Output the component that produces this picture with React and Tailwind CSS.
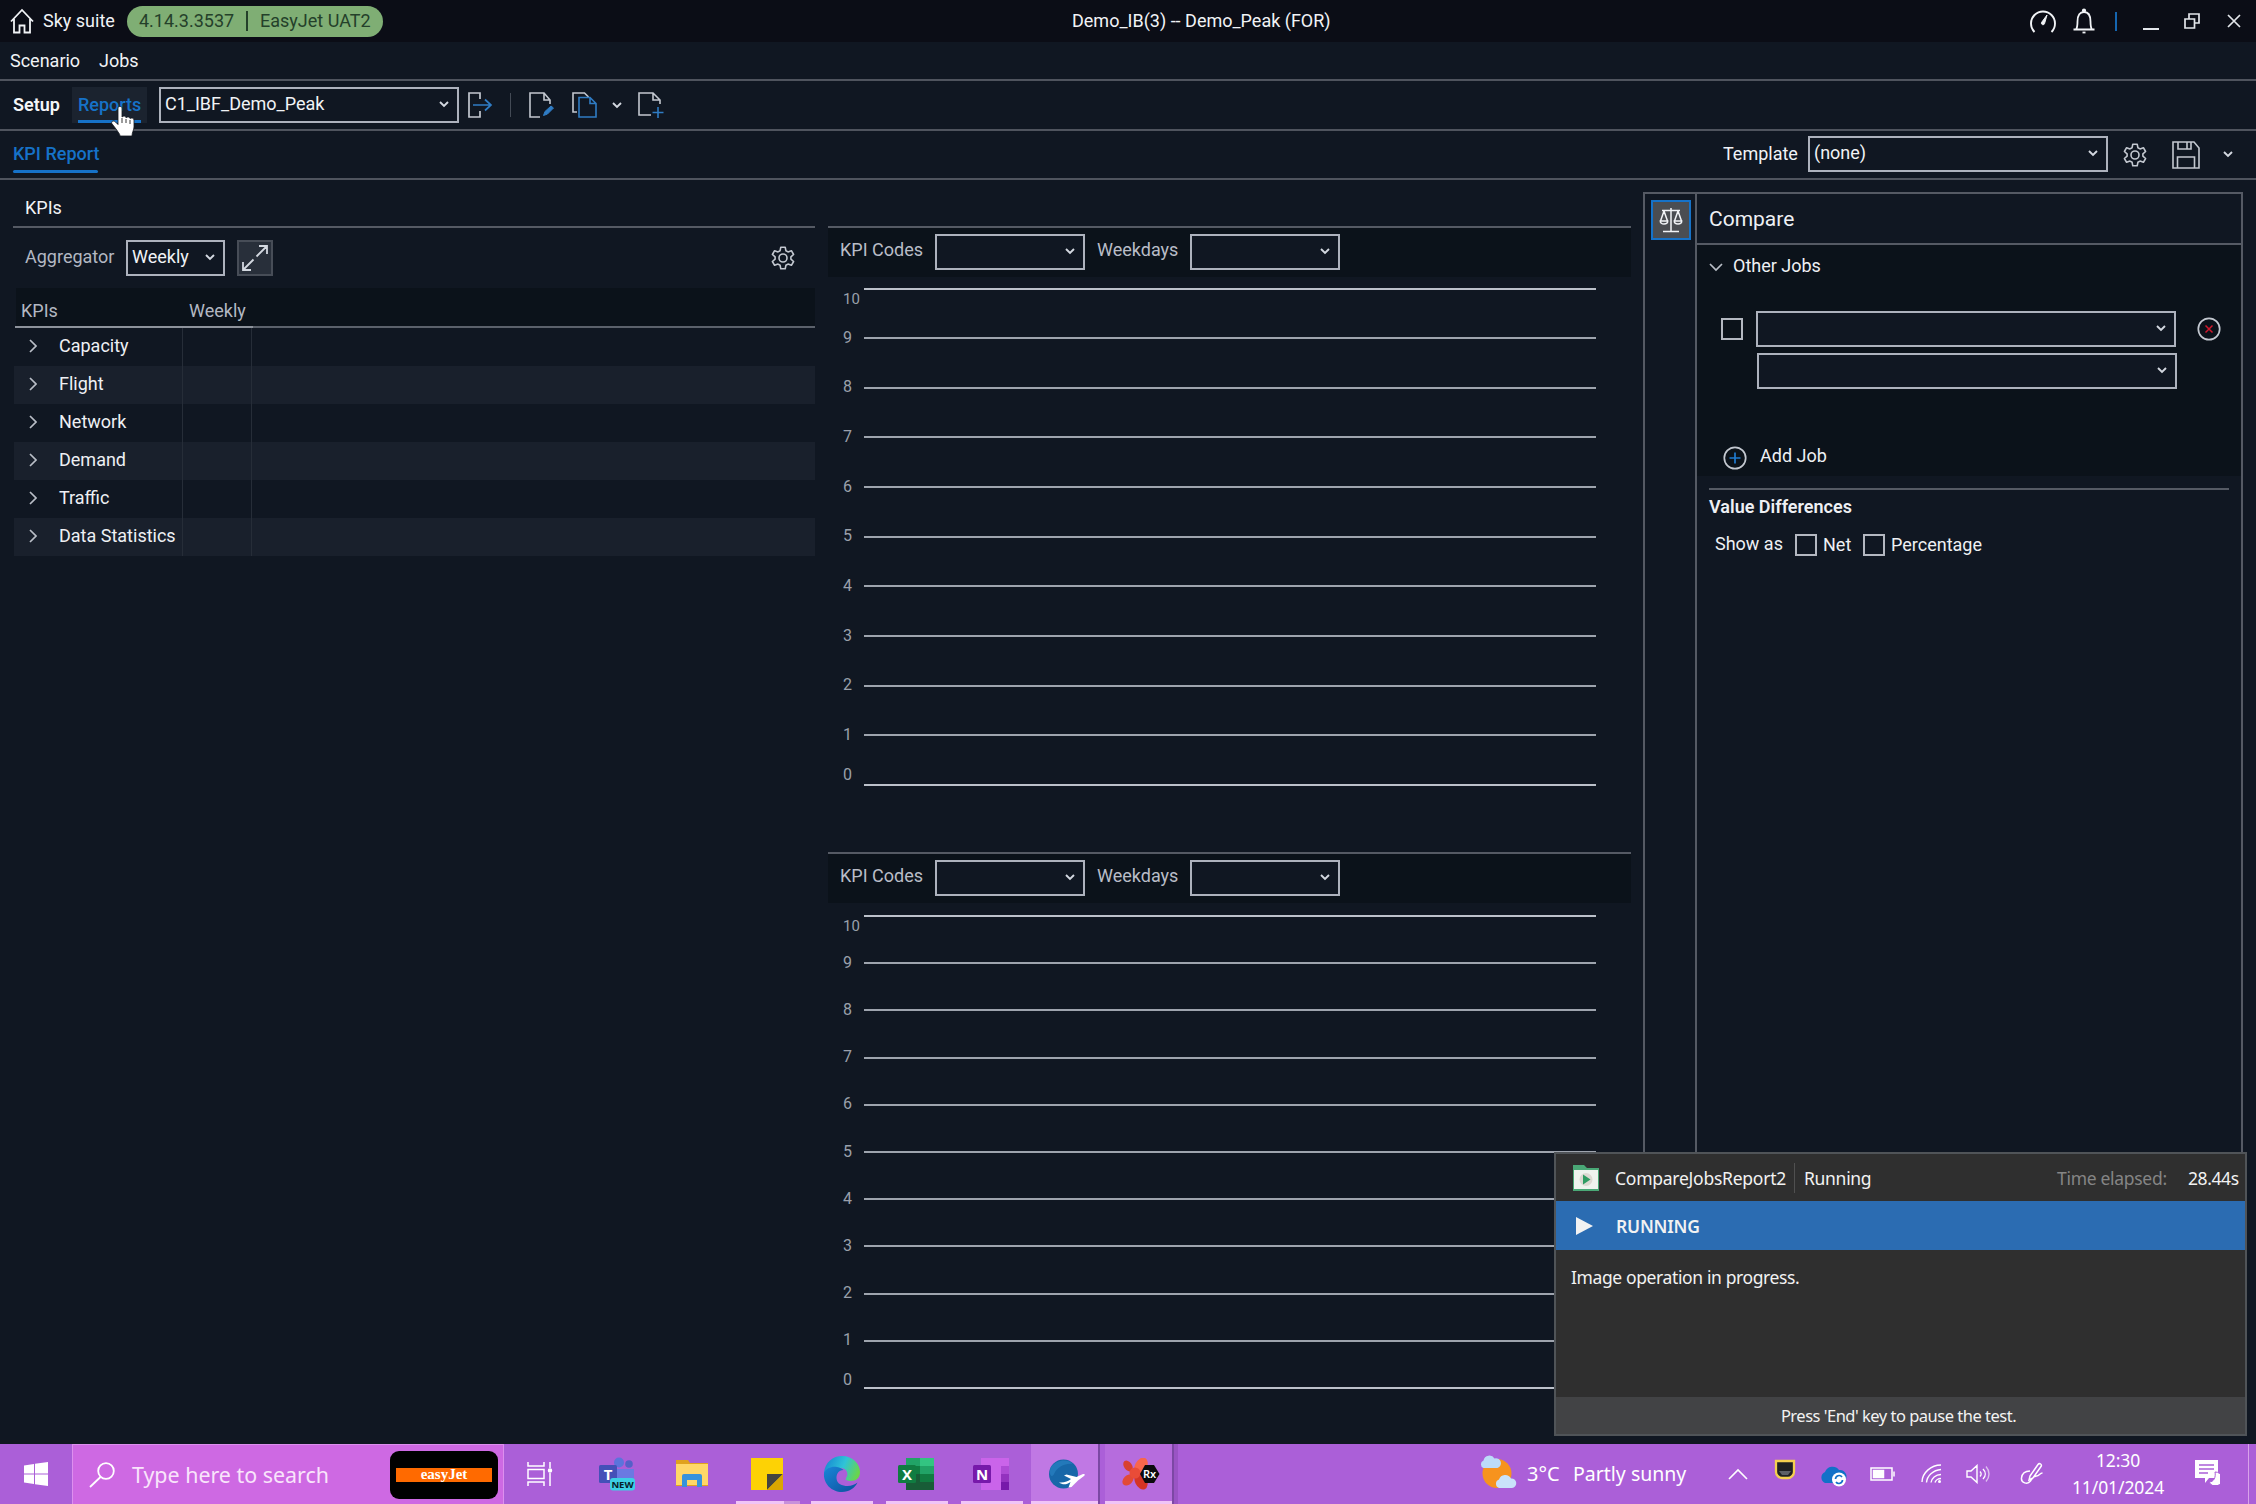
import React from "react";

function Chevron({ className = "" }) {
  return (
    <svg viewBox="0 0 10 7" className={"h-[7px] w-[10px] shrink-0 " + className} fill="none" stroke="#d3d8e0" strokeWidth="1.9">
      <path d="M1 1l4 4 4-4" />
    </svg>
  );
}

function Select({ label = "", className = "" }) {
  return (
    <div className={"flex h-9 shrink-0 items-center justify-between border-2 border-[#adb2bd] bg-[#101722] pr-2 pl-[5px] text-[#f1f3f6] " + className}>
      <span className="-mt-0.5 -ml-px whitespace-nowrap">{label}</span>
      <Chevron className="-mt-0.5" />
    </div>
  );
}

function Check({ className = "" }) {
  return <div className={"size-[22px] shrink-0 border-2 border-[#b4b8c1] " + className} />;
}

function Gear({ className = "" }) {
  return (
    <svg viewBox="0 0 26 26" className={"size-[26px] shrink-0 " + className} fill="none" stroke="#c3c8d0" strokeWidth="1.6" strokeLinejoin="round">
      <path d="M10.8 1.2h4.4l.7 3.5 2.1 1.2 3.4-1.2 2.2 3.8-2.7 2.3v2.4l2.7 2.3-2.2 3.8-3.4-1.2-2.1 1.2-.7 3.5h-4.4l-.7-3.5L8 18.1l-3.4 1.2-2.2-3.8 2.7-2.3v-2.4L2.4 8.5l2.2-3.8L8 5.9l2.1-1.2z" transform="translate(0 1)" />
      <circle cx="13" cy="13" r="4" />
    </svg>
  );
}

function TitleBar() {
  return (
    <header className="flex h-[42px] shrink-0 items-center bg-[#0b0d16] text-[#f1f3f6]">
      <svg viewBox="0 0 24 26" className="ml-[10px] h-[26px] w-6 shrink-0" fill="none" stroke="#f1f3f6" strokeWidth="1.8">
        <path d="M1 13.5L12 2l11 11.500M4 11v13.500h5.500v-7h5v7H20V11" />
      </svg>
      <span className="ml-[9px] w-[84px] text-[18px] whitespace-nowrap">Sky suite</span>
      <div className="flex h-[31px] w-64 shrink-0 items-center rounded-full bg-[#7fae74] pl-3 text-[18px] text-[#24402a]">
        <span className="w-[107px] whitespace-nowrap">4.14.3.3537</span>
        <span className="h-5 w-0.5 bg-[#24402a]" />
        <span className="ml-3 whitespace-nowrap">EasyJet UAT2</span>
      </div>
      <span className="ml-[689px] w-[957px] text-[18px] whitespace-nowrap">Demo_IB(3) -- Demo_Peak (FOR)</span>
      <svg viewBox="0 0 28 26" className="h-[26px] w-7 shrink-0" fill="none" stroke="#f1f3f6" strokeWidth="1.9">
        <path d="M5.500 24A12 12 0 1 1 22.500 24" />
        <path d="M18 7l-5.500 7.500a1.600 1.600 0 0 0 3 1.200z" fill="#f1f3f6" strokeWidth="1" />
      </svg>
      <svg viewBox="0 0 24 26" className="ml-[15px] h-[26px] w-6 shrink-0" fill="none" stroke="#f1f3f6" strokeWidth="1.800">
        <path d="M1.500 21.500h21M4 21.500c1.500-2 1.500-4 1.500-8C5.500 7 8 4 12 4s6.500 3 6.500 9.500c0 4 0 6 1.500 8" />
        <circle cx="12" cy="2.500" r="1.200" fill="#f1f3f6" />
        <path d="M10.500 24.500h3" />
      </svg>
      <span className="ml-[19px] h-[19px] w-0.5 shrink-0 bg-[#1565b0]" />
      <span className="mt-4 ml-[26px] h-0.5 w-4 shrink-0 bg-[#e3e6ea]" />
      <svg viewBox="0 0 16 16" className="ml-[25px] size-4 shrink-0" fill="none" stroke="#e3e6ea" strokeWidth="1.700">
        <path d="M1 6h9.500v9H1zM5 6V1h10v9h-4.500" />
      </svg>
      <svg viewBox="0 0 14 14" className="ml-[27px] size-[14px] shrink-0" stroke="#e3e6ea" strokeWidth="1.700">
        <path d="M1 1l12 12M13 1L1 13" />
      </svg>
    </header>
  );
}

function Toolbar() {
  return (
    <div className="flex h-[48px] shrink-0 items-center">
      <span className="ml-[13px] w-[59px] font-semibold text-[#f4f6f8]">Setup</span>
      <div className="flex h-9 w-[75px] shrink-0 flex-col bg-[#1b232f] pl-[6px] text-[#1672c8]">
        <span className="h-[33px] leading-[35px] font-medium">Reports</span>
        <span className="h-[3px] w-[63px] bg-[#1672c8]" />
      </div>
      <Select label="C1_IBF_Demo_Peak" className="ml-3 w-[300px]" />
      <svg viewBox="0 0 25 26" className="ml-[9px] h-[26px] w-[25px] shrink-0" fill="none" stroke="#c3c8d0" strokeWidth="1.700">
        <path d="M12 7V1H1v24h11v-6" />
        <path d="M5 13h18M17 7.500l6 5.500-6 5.500" stroke="#2f7cc4" />
      </svg>
      <span className="ml-[17px] h-6 w-px shrink-0 bg-[#434a55]" />
      <svg viewBox="0 0 26 26" className="ml-[18px] size-[26px] shrink-0" fill="none" stroke="#c3c8d0" strokeWidth="1.600">
        <path d="M11 25H1V1h14l6 7v4M15 1v7h6" />
        <path d="M14.500 23.500l1.500-4 6-5.500 2.500 2-6 6z" fill="#2f7cc4" stroke="#2f7cc4" strokeWidth="1" />
      </svg>
      <svg viewBox="0 0 26 26" className="ml-[17px] size-[26px] shrink-0" fill="none" strokeWidth="1.600">
        <path d="M5 20H1V1h11.500l4 4" stroke="#c3c8d0" />
        <path d="M7 5.500h11l6 6V25H7zM18 5.500v6h6" stroke="#2f7cc4" />
      </svg>
      <Chevron className="ml-[14px]" />
      <svg viewBox="0 0 26 26" className="ml-4 size-[26px] shrink-0" fill="none" stroke="#c3c8d0" strokeWidth="1.600">
        <path d="M13 23H1V1h14l7 7v4M15 1v7h7" />
        <path d="M20 15v11M14.500 20.500h11" stroke="#2f7cc4" />
      </svg>
    </div>
  );
}

function ReportBar() {
  return (
    <div className="flex h-[47px] shrink-0 items-center">
      <div className="ml-[13px] flex h-10 w-[1710px] shrink-0 flex-col text-[#1672c8]">
        <span className="h-[35px] leading-[37px] font-medium">KPI Report</span>
        <span className="h-[3px] w-[85px] rounded-full bg-[#1672c8]" />
      </div>
      <span className="-mt-0.5 w-[85px] shrink-0 text-[#f1f3f6]">Template</span>
      <Select label="(none)" className="-mt-px w-[300px]" />
      <Gear className="ml-[14px]" />
      <svg viewBox="0 0 28 28" className="ml-6 size-7 shrink-0" fill="none" stroke="#c3c8d0" strokeWidth="1.600">
        <path d="M1 1h21l5 6v20H1zM6 1v7h13V1M15 1v7M5.500 27V16h17v11" />
      </svg>
      <Chevron className="ml-[23px]" />
    </div>
  );
}

const kpis = ["Capacity", "Flight", "Network", "Demand", "Traffic", "Data Statistics"];

function KpiPanel() {
  return (
    <section className="ml-[13px] flex w-[802px] shrink-0 flex-col">
      <div className="flex h-[48px] items-center border-b-2 border-[#555a64] pt-[9px] pl-3 text-[#f1f3f6]">KPIs</div>
      <div className="flex h-[60px] items-center pl-3 text-[#b3b8c2]">
        <span className="-mt-[3px] w-[101px]">Aggregator</span>
        <Select label="Weekly" className="w-[99px]" />
        <div className="ml-3 flex size-9 items-center justify-center border-2 border-[#474d57] bg-[#282f3a]">
          <svg viewBox="0 0 26 26" className="size-[26px] shrink-0" fill="none" stroke="#d3d8e0" strokeWidth="1.800">
            <path d="M14.500 11.500L25 1M17 1h8v8M11.500 14.500L1 25M1 17v8h8" />
          </svg>
        </div>
        <Gear className="ml-[497px]" />
      </div>
      <div className="ml-[3px] flex h-[38px] items-center bg-[#0b121a] pt-[7px] pl-[5px] text-[#b3b8c2]">
        <span className="w-[168px]">KPIs</span>
        <span>Weekly</span>
      </div>
      <div className="ml-0.5 flex h-0.5 bg-[#5b616b]">
        <span className="w-[238px] bg-[#8d929b]" />
      </div>
      {kpis.map((name, i) => (
        <div key={name} className={"ml-px flex h-[38px] shrink-0 items-center " + (i % 2 ? "bg-[#19202c]" : "")}>
          <div className="flex h-full w-[169px] items-center border-r border-[#262d38] pb-0.5 pl-[15px]">
            <svg viewBox="0 0 8 14" className="h-[14px] w-2 shrink-0" fill="none" stroke="#b9bec7" strokeWidth="1.700">
              <path d="M1 1l6 6-6 6" />
            </svg>
            <span className="ml-[22px] whitespace-nowrap text-[#eef0f4]">{name}</span>
          </div>
          <div className="h-full w-[69px] border-r border-[#262d38]" />
        </div>
      ))}
    </section>
  );
}

function Chart({ first, step, labelTop, labelBottom, height }) {
  const ticks = Array.from({ length: 11 }, (_, i) => 10 - i);
  return (
    <svg width="803" height={height} className="block shrink-0" fontFamily="Roboto, sans-serif" fontSize="16" fill="#9aa0ab">
      {ticks.map((t, i) => {
        const y = first + i * step;
        const mid = i === 0 ? labelTop : i === 10 ? labelBottom : y - 1.5;
        return (
          <g key={t}>
            <rect x="36" y={Math.round(y) - 1} width="732" height="2" fill={i === 0 || i === 10 ? "#bcc1ca" : "#9ea4ae"} />
            <text x="15" y={mid + 6} fontSize={i === 0 ? 15 : 16}>{t}</text>
          </g>
        );
      })}
    </svg>
  );
}

function ChartPanel(props) {
  return (
    <>
      <div className="flex h-[51px] shrink-0 items-start border-t-2 border-[#555a64] bg-[#0b121a] pt-1.5 pl-3 text-[#b9bdc7]">
        <span className="mt-1 w-[95px]">KPI Codes</span>
        <Select className="w-[150px]" />
        <span className="mt-1 ml-3 w-[93px]">Weekdays</span>
        <Select className="w-[150px]" />
      </div>
      <Chart {...props} />
    </>
  );
}

function ComparePanel() {
  return (
    <aside className="mt-3 mb-3 ml-[12px] flex w-[600px] shrink-0 border-2 border-b-0 border-[#555a64]">
      <div className="flex w-[52px] shrink-0 justify-center border-r-2 border-[#555a64] pt-1.5 pl-px">
        <div className="flex size-10 items-center justify-center border-2 border-[#1672c8] bg-[#4a4d52]">
          <svg viewBox="0 0 24 26" className="h-[26px] w-6 shrink-0" fill="none" stroke="#f1f3f6" strokeWidth="1.500">
            <path d="M12 1v23M4 24.500h16M3 3.500h18M5 4L1.500 14M5 4l3.500 10M19 4l-3.500 10M19 4l3.500 10M1.300 14h7.400c0 2-1.500 3-3.700 3s-3.700-1-3.700-3zM15.300 14h7.400c0 2-1.500 3-3.700 3s-3.700-1-3.700-3z" />
          </svg>
        </div>
      </div>
      <div className="flex flex-1 flex-col text-[#eef0f4]">
        <div className="flex h-[51px] shrink-0 items-center border-b-2 border-[#555a64] pl-3 text-[21px]">Compare</div>
        <div className="flex h-[231px] shrink-0 flex-col bg-[#0b121a]">
          <div className="flex h-[42px] items-center pl-3">
            <svg viewBox="0 0 14 9" className="mt-0.5 h-[9px] w-[14px]" fill="none" stroke="#b9bec7" strokeWidth="1.700">
              <path d="M1 1l6 6 6-6" />
            </svg>
            <span className="ml-[10px]">Other Jobs</span>
          </div>
          <div className="mt-6 flex h-9 items-center pl-6">
            <Check />
            <Select className="ml-[13px] w-[420px]" />
            <svg viewBox="0 0 24 24" className="ml-[21px] size-6 shrink-0" fill="none">
              <circle cx="12" cy="12" r="10.700" stroke="#c3c8d0" strokeWidth="1.700" />
              <path d="M8.500 8.500l7 7M15.500 8.500l-7 7" stroke="#d0182c" strokeWidth="1.500" />
            </svg>
          </div>
          <Select className="mt-1.5 ml-[60px] w-[420px]" />
          <div className="mt-[57px] flex h-6 items-center pl-[26px]">
            <svg viewBox="0 0 24 24" className="size-6 shrink-0" fill="none">
              <circle cx="12" cy="12" r="10.700" stroke="#c3c8d0" strokeWidth="1.700" />
              <path d="M12 6.500v11M6.500 12h11" stroke="#1f7bd0" strokeWidth="1.700" />
            </svg>
            <span className="-mt-1 ml-[13px]">Add Job</span>
          </div>
        </div>
        <div className="mx-3 mt-3 h-0.5 bg-[#555a64]" />
        <div className="mt-[5px] pl-3 leading-6 font-semibold">Value Differences</div>
        <div className="mt-[14px] flex h-6 items-center pl-[18px]">
          <span className="-mt-0.5 w-[80px]">Show as</span>
          <Check />
          <span className="ml-1.5 w-10">Net</span>
          <Check />
          <span className="ml-1.5">Percentage</span>
        </div>
      </div>
    </aside>
  );
}

function RunPopup() {
  return (
    <div className="absolute top-[1152px] left-[1554px] flex h-[284px] w-[693px] flex-col border-2 border-[#505458] bg-[#2f2f2f] font-['Noto_Sans',sans-serif] text-[17.500px] text-[#f2f2f2]">
      <div className="flex h-[47px] shrink-0 items-center">
        <svg viewBox="0 0 28 28" className="ml-4 size-7 shrink-0">
          <path d="M1 1h11l3 3h12v23H1z" fill="#4aa876" />
          <path d="M2 6h24v19H2z" fill="#eef3ee" />
          <circle cx="14" cy="15.500" r="6.500" fill="#dcd9d2" />
          <path d="M11 10.500l7.500 5-7.500 5z" fill="#2f9c63" />
        </svg>
        <span className="ml-[15px] w-[179px] whitespace-nowrap tracking-[-0.25px]">CompareJobsReport2</span>
        <span className="h-[30px] w-px bg-[#505050]" />
        <span className="ml-[9px] w-[253px] tracking-[-0.3px]">Running</span>
        <span className="w-[131px] whitespace-nowrap tracking-[-0.3px] text-[#858585]">Time elapsed:</span>
        <span className="tracking-[-0.4px]">28.44s</span>
      </div>
      <div className="flex h-[49px] shrink-0 items-center bg-[#2b6cb2]">
        <svg viewBox="0 0 17 18" className="ml-5 h-[18px] w-[17px]"><path d="M0 0l17 9-17 9z" fill="#f2f2f2" /></svg>
        <span className="ml-[23px] font-semibold tracking-[-0.2px]">RUNNING</span>
      </div>
      <div className="flex-1 pt-[15px] pl-[15px] tracking-[-0.38px]">Image operation in progress.</div>
      <div className="flex h-[37px] shrink-0 items-center justify-center bg-[#424345] pr-1 text-[16.500px] tracking-[-0.5px]">Press 'End' key to pause the test.</div>
    </div>
  );
}

function AppButton({ children, className = "", line = "bg-[#f0c4f7]" }) {
  return (
    <div className={"flex h-full shrink-0 flex-col items-center " + className}>
      <div className="flex flex-1 items-center">{children}</div>
      <div className={"-mt-[3px] h-[3px] w-full " + line} />
    </div>
  );
}

function Taskbar() {
  return (
    <footer className="flex h-[60px] shrink-0 items-center bg-[#ab5fd8] font-['Noto_Sans',sans-serif] text-white">
      <svg viewBox="0 0 24 24" className="ml-6 size-6 shrink-0" fill="#fff">
        <path d="M0 3.500l10-1.500v9.500H0zM11 1.800L24 0v11.500H11zM0 12.500h10V22L0 20.600zM11 12.500h13V24l-13-1.800z" />
      </svg>
      <div className="ml-6 flex h-full w-[432px] shrink-0 items-center border border-b-0 border-[#dd8fee] bg-[#ce69e3]">
        <svg viewBox="0 0 26 26" className="ml-4 size-[26px] shrink-0" fill="none" stroke="#fff" strokeWidth="1.800">
          <circle cx="17" cy="9" r="7.800" />
          <path d="M11.500 15L1 25" />
        </svg>
        <span className="ml-[17px] w-[258px] text-[21.400px] whitespace-nowrap text-[#f9e4fb]">Type here to search</span>
        <div className="flex h-12 w-[108px] shrink-0 items-center justify-center rounded-[9px] bg-black">
          <div className="flex h-[14px] w-24 items-center justify-center bg-[#ff6a00] font-['Liberation_Serif',serif] text-[15px] leading-none font-bold">easyJet</div>
        </div>
      </div>
      <svg viewBox="0 0 26 26" className="ml-[23px] size-[26px] shrink-0" fill="none" stroke="#fff" strokeWidth="1.500">
        <path d="M1 1v4h16V1M1 25v-4h16v4M1 8.500h16v9H1zM23 1v6M23 12v13" />
        <circle cx="23" cy="9.500" r="1.500" fill="#fff" />
      </svg>
      <svg viewBox="0 0 38 34" className="ml-[45px] h-[34px] w-[38px] shrink-0">
        <circle cx="21" cy="5.500" r="5" fill="#5b74dc" />
        <circle cx="31" cy="7" r="3.800" fill="#5560c8" />
        <path d="M19 12h17v8a8 8 0 0 1-8 8h-9z" fill="#6b79e2" />
        <rect x="1" y="8" width="18" height="18" rx="1.500" fill="#4450b8" />
        <text x="10" y="22.500" textAnchor="middle" fontSize="15" fontWeight="700" fill="#fff" fontFamily="Noto Sans, sans-serif">T</text>
        <rect x="12" y="21" width="25" height="12.500" rx="3" fill="#3cd0e4" />
        <text x="24.500" y="31" textAnchor="middle" fontSize="9.500" fontWeight="700" fill="#08202a" fontFamily="Noto Sans, sans-serif">NEW</text>
      </svg>
      <svg viewBox="0 0 34 28" className="-mt-0.5 ml-[39px] h-7 w-[34px] shrink-0">
        <path d="M1 1h12l2 3h18v23H1z" fill="#e0a21d" />
        <path d="M1 5h32v21H1z" fill="#ffd768" />
        <path d="M7 28V17a2 2 0 0 1 2-2h16a2 2 0 0 1 2 2v11h-5v-7H12v7z" fill="#3793dc" />
      </svg>
      <AppButton className="ml-[27px] w-[64px]" line="bg-[linear-gradient(90deg,#f0c4f7_0_48px,#c791db_48px)]">
        <svg viewBox="0 0 32 32" className="-ml-0.5 size-8">
          <path d="M0 0h32v32H0z" fill="#fdd205" />
          <path d="M16 32V16h16z" fill="#45443f" />
          <path d="M16 32l16-16v16z" fill="#dba600" />
        </svg>
      </AppButton>
      <AppButton className="ml-[11px] w-[62px]">
        <svg viewBox="0 0 38 38" className="size-[38px]">
          <defs>
            <linearGradient id="edgeTop" x1="0" x2="1" y1=".2" y2=".5">
              <stop offset="0" stopColor="#1687d2" />
              <stop offset=".55" stopColor="#2fc3d8" />
              <stop offset="1" stopColor="#68d54c" />
            </linearGradient>
            <linearGradient id="edgeLow" x1="0" x2="1" y1="0" y2="1">
              <stop offset="0" stopColor="#1b86d8" />
              <stop offset="1" stopColor="#0b4f9c" />
            </linearGradient>
          </defs>
          <path d="M1 18C2 7 10 1 19 1c11 0 18 8 18 16 0 6-4 9-9 9-4 0-6-1-5-3 3-4 1-10-6-10-8 0-14 4-16 9z" fill="url(#edgeTop)" />
          <path d="M1 18c2-5 8-7 13-6 3 .5 5 1.500 6.500 3-5 0-7 4-7 8 0 6 6 8 11 8 4 0 7-1.500 10-3.500C32 33 26 37 19 37 9 37 0 29 1 18z" fill="url(#edgeLow)" />
        </svg>
      </AppButton>
      <AppButton className="ml-[13px] w-[62px]">
        <svg viewBox="0 0 36 32" className="-ml-0.5 h-8 w-9">
          <path d="M8 0h28v32H8z" fill="#21a366" />
          <path d="M22 0h14v8H22z" fill="#33c481" />
          <path d="M8 8h14v8H8z" fill="#107c41" />
          <path d="M8 16h28v16H8z" fill="#185c37" />
          <path d="M22 16h14v8H22z" fill="#107c41" />
          <rect y="7" width="18" height="18" rx="1.500" fill="#107c41" />
          <text x="9" y="21.500" textAnchor="middle" fontSize="15" fontWeight="700" fill="#fff" fontFamily="Noto Sans, sans-serif">X</text>
        </svg>
      </AppButton>
      <AppButton className="ml-[13px] w-[62px]">
        <svg viewBox="0 0 36 32" className="-ml-0.5 h-8 w-9">
          <path d="M8 0h28v32H8z" fill="#ca64ea" />
          <path d="M28 8h8v8h-8z" fill="#ae4bd5" />
          <path d="M28 16h8v8h-8z" fill="#9332bf" />
          <path d="M28 24h8v8h-8z" fill="#7719aa" />
          <rect y="7" width="18" height="18" rx="1.500" fill="#7719aa" />
          <text x="9" y="21.500" textAnchor="middle" fontSize="15" fontWeight="700" fill="#fff" fontFamily="Noto Sans, sans-serif">N</text>
        </svg>
      </AppButton>
      <AppButton className="ml-2 w-[67px] bg-[#c078e4]">
        <svg viewBox="0 0 36 30" className="ml-1 h-[30px] w-9">
          <circle cx="14.500" cy="15" r="14.500" fill="#1767a8" />
          <path d="M2 8C7 1 18-1 24 5c-8-1-16 3-19 10-2 4-4 1-4-1s0-4 1-6z" fill="#2b86c6" opacity=".6" />
          <path d="M10 23.500c5 .5 9-1 12-3.500l-7-3.500 2.500-1 10 2.500 6.500-3c2-.3 2.500.7 1 2l-6 4.500-6.500 6.500-3 .5 2-5.500c-4 3-8 3-11.500.5z" fill="#fff" />
        </svg>
      </AppButton>
      <span className="h-full w-[2px] bg-[#7c48a4]" />
      <AppButton className="ml-[5px] w-[67px] bg-[#b66cdd]">
        <svg viewBox="0 0 38 32" className="ml-1 h-8 w-[38px]">
          <ellipse cx="6" cy="8" rx="4" ry="6" transform="rotate(-35 6 8)" fill="#d8402f" />
          <ellipse cx="19" cy="8" rx="6" ry="9" transform="rotate(28 19 8)" fill="#f8664c" />
          <ellipse cx="6" cy="22" rx="4.500" ry="6.500" transform="rotate(45 6 22)" fill="#e24a36" />
          <ellipse cx="19" cy="23" rx="6" ry="9" transform="rotate(-25 19 23)" fill="#d53425" />
          <circle cx="13" cy="15" r="5.500" fill="#e94c38" />
          <path d="M23 7h9l5.500 9-5.500 9h-9l-5-9z" fill="#0b0b0e" />
          <text x="27.500" y="20" textAnchor="middle" fontSize="11" fontWeight="600" fill="#fff" fontFamily="Noto Sans, sans-serif">Rx</text>
        </svg>
      </AppButton>
      <span className="h-full w-[2px] bg-[#7c48a4]" />
      <span className="h-full w-[4px] bg-[#9a54c4]" />
      <svg viewBox="0 0 38 34" className="-mt-1 ml-[301px] h-[34px] w-[38px] shrink-0">
        <circle cx="18" cy="18.500" r="14.500" fill="#f7931e" />
        <path d="M4.500 13a4 4 0 0 1 0-7.500 6 6 0 0 1 11-2 4 4 0 0 1 3 9.500z" fill="#bcdcf8" />
        <path d="M20 33a4.500 4.500 0 0 1 0-8.500 6.500 6.500 0 0 1 12-1 4.500 4.500 0 0 1 1 9.500z" fill="#c9e3fa" />
      </svg>
      <span className="ml-[10px] w-[46px] text-[20px] whitespace-nowrap">3°C</span>
      <span className="w-[155px] text-[19.500px] whitespace-nowrap">Partly sunny</span>
      <svg viewBox="0 0 20 12" className="h-3 w-5 shrink-0" fill="none" stroke="#fff" strokeWidth="1.600"><path d="M1 11l9-9 9 9" /></svg>
      <svg viewBox="0 0 24 22" className="-mt-2 ml-[25px] h-[22px] w-6 shrink-0">
        <path d="M3 2h18v11c0 3-3 6-6 6H9c-3 0-6-3-6-6z" fill="#1e2022" stroke="#f4d04f" strokeWidth="2.300" />
        <path d="M6 12h12l-3 4H9z" fill="#5c6066" />
      </svg>
      <svg viewBox="0 0 28 22" className="mt-1 ml-[23px] h-[22px] w-7 shrink-0">
        <path d="M5 18a6 6 0 0 1 0-11 8 8 0 0 1 14-2 6 6 0 0 1 2 13z" fill="#1271c8" />
        <circle cx="19" cy="14.500" r="7" fill="#fff" />
        <path d="M15.500 14a3.600 3.600 0 0 1 6.500-2M22.500 15a3.600 3.600 0 0 1-6.500 2" fill="none" stroke="#1271c8" strokeWidth="1.700" />
      </svg>
      <svg viewBox="0 0 25 14" className="ml-[22px] h-[14px] w-[25px] shrink-0" fill="none" stroke="#fff" strokeWidth="1.500">
        <path d="M1 1h21v12H1zM24 4.500v5" />
        <path d="M3.500 3.500h10v7h-10z" fill="#fff" />
      </svg>
      <svg viewBox="0 0 22 20" className="ml-[26px] h-5 w-[22px] shrink-0" fill="none" stroke="#fff" strokeWidth="1.400">
        <path d="M1 18C1 9 10 1 20 1M5.500 18.500C6 12 12 6 20 5.500M10 18.500c.5-4 4.500-8 10-8M14 18.500c.5-2 3-4 6-4" />
        <circle cx="18.500" cy="17.500" r="1.500" fill="#fff" stroke="none" />
      </svg>
      <svg viewBox="0 0 24 20" className="ml-[23px] h-5 w-6 shrink-0" fill="none" stroke="#fff" strokeWidth="1.400">
        <path d="M1 7h4l6-5.500v17L5 13H1zM14 7.500c1.500 1.500 1.500 3.500 0 5M17 5c3 3 3 7 0 10" />
        <path d="M20 2.500c4 4.500 4 10.500 0 15" opacity=".6" />
      </svg>
      <svg viewBox="0 0 24 24" className="ml-[30px] size-6 shrink-0" fill="none" stroke="#fff" strokeWidth="1.500">
        <path d="M10 14L18 2.500c1.500-2 4.500 0 3 2L13 16l-4 2zM10 9c-5 0-8 3-8.500 7-.5 5 6 7 9 3 2-3 3-5 6-5s3-3 6-3" />
      </svg>
      <div className="ml-[24px] flex w-[100px] shrink-0 flex-col items-center text-[17.500px] leading-[27px] tracking-[-0.1px] whitespace-nowrap">
        <span>12:30</span>
        <span>11/01/2024</span>
      </div>
      <svg viewBox="0 0 26 26" className="-mt-1 ml-[26px] size-[26px] shrink-0">
        <path d="M1 1h23v18h-9l-4 5v-5H1z" fill="#fff" />
        <path d="M5 6h15M5 10h15M5 14h9" stroke="#ab5fd8" strokeWidth="1.500" />
        <path d="M21 13a7 7 0 1 1-6 10c5 0 7-5 6-10z" fill="#fff" stroke="#ab5fd8" strokeWidth="1" />
      </svg>
      <span className="ml-[28px] h-full w-px bg-[#d9a3ea]" />
    </footer>
  );
}

export default function App() {
  return (
    <div className="relative flex h-[1504px] w-[2256px] flex-col overflow-hidden bg-[#101722] font-[Roboto,sans-serif] text-[18px] leading-6">
      <TitleBar />
      <nav className="flex h-[37px] shrink-0 items-center pl-[10px] text-[#f1f3f6]">
        <span className="w-[89px]">Scenario</span>
        <span>Jobs</span>
      </nav>
      <div className="h-0.5 shrink-0 bg-[#4f545e]" />
      <Toolbar />
      <div className="h-0.5 shrink-0 bg-[#4f545e]" />
      <ReportBar />
      <div className="h-0.5 shrink-0 bg-[#4f545e]" />
      <main className="flex min-h-0 flex-1">
        <KpiPanel />
        <section className="ml-[13px] flex w-[803px] shrink-0 flex-col pt-[46px]">
          <ChartPanel first={11.5} step={49.65} labelTop={21} labelBottom={497} height={575} />
          <ChartPanel first={13} step={47.2} labelTop={22} labelBottom={476} height={530} />
        </section>
        <ComparePanel />
      </main>
      <Taskbar />
      <RunPopup />
      <svg viewBox="0 0 24 31" className="absolute top-[106px] left-[111px] h-[31px] w-6">
        <path d="M7 2c0-2 4-2 4 0v9c1-1.500 4-1 4 .7 1-1.300 4-.8 4 .8 1-1 4-.5 4 1.500v7c0 3-2 5-2 9H9c0-2-2-4-4-7L.8 17.500C0 15.500 2.500 14 4.500 16L7 18.500z" fill="#fff" stroke="#11161e" strokeWidth=".8" />
        <path d="M11 12v5M15 13v4M19 14v4" stroke="#222" strokeWidth=".9" />
      </svg>
    </div>
  );
}
